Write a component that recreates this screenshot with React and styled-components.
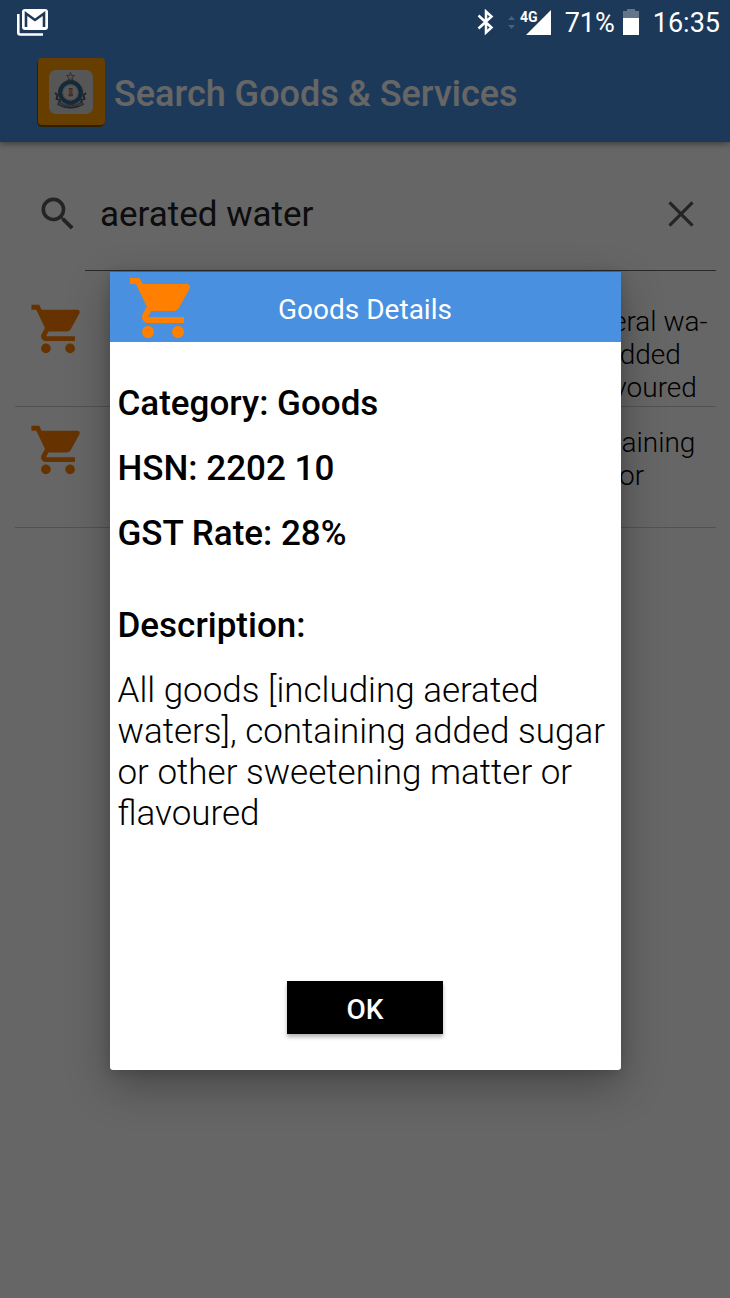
import React, { useState } from "react";
import styled, { createGlobalStyle } from "styled-components";

const GlobalStyle = createGlobalStyle`
  * { box-sizing: border-box; }
  body {
    margin: 0;
    background: #fff;
    color: #000;
    font-family: Roboto, "Noto Sans", sans-serif;
  }
  h1, h2, h3, p, ul { margin: 0; padding: 0; }
`;

const Screen = styled.div`
  position: relative;
  min-height: 100vh;
`;

const StatusBar = styled.div`
  position: absolute;
  inset: 0 0 auto;
  z-index: 3;
  display: flex;
  align-items: center;
  justify-content: space-between;
  height: 44px;
  padding: 0 10px 0 17px;
  color: #fff;
  font-size: 27px;
`;

const StatusGroup = styled.div`
  display: flex;
  align-items: center;
  gap: ${(p) => p.$gap || 0}px;
`;

const StatusText = styled.span`
  padding-top: 2px;
  line-height: 32px;
`;

const AppBar = styled.header`
  display: flex;
  align-items: center;
  gap: 9px;
  height: 142px;
  padding: 44px 16px 0 37px;
  background: #4990e0;
  box-shadow: 0 2px 6px rgba(0, 0, 0, 0.4);
`;

const AppLogo = styled.svg`
  width: 68px;
  height: 70px;
  margin-bottom: 2px;
`;

const AppTitle = styled.h1`
  padding-top: 2px;
  color: #fff;
  font-size: 36px;
  font-weight: 500;
  line-height: 41px;
`;

const SearchRow = styled.label`
  display: flex;
  align-items: center;
  padding: 15px 14px 0 36px;
  color: #5a5a5a;
`;

const SearchField = styled.div`
  display: flex;
  flex: 1;
  align-items: center;
  height: 114px;
  margin-left: 5px;
  padding: 0 13px 0 15px;
  border-bottom: 1px solid #666;
`;

const SearchInput = styled.input`
  flex: 1;
  min-width: 0;
  padding: 2px 0 0;
  border: 0;
  outline: 0;
  background: none;
  color: #212121;
  font: 400 35px/41px Roboto, sans-serif;
`;

const ClearButton = styled.button`
  display: flex;
  padding: 0;
  border: 0;
  background: none;
  color: inherit;
`;

const Results = styled.ul`
  margin: 15px 14px 0 15px;
  list-style: none;
`;

const ResultRow = styled.li`
  display: flex;
  gap: 34px;
  height: 121px;
  padding: 14px 0 0 14px;
  overflow: hidden;
  border-bottom: 1px solid #ccc;
`;

const ResultText = styled.p`
  flex: 1;
  padding-top: 5px;
  font-size: 28px;
  font-weight: 300;
  line-height: 33px;
  white-space: pre;
`;

const Scrim = styled.div`
  position: absolute;
  inset: 0;
  z-index: 2;
  display: flex;
  align-items: center;
  justify-content: center;
  padding-top: 44px;
  background: rgba(0, 0, 0, 0.6);
`;

const Dialog = styled.section`
  width: 70%;
  border-radius: 3px;
  background: #fff;
  box-shadow: 0 16px 44px rgba(0, 0, 0, 0.3), 0 2px 12px rgba(0, 0, 0, 0.15);
`;

const DialogHeader = styled.header`
  display: grid;
  grid-template-columns: 72px 1fr 72px;
  align-items: center;
  height: 70px;
  padding: 0 17px;
  background: #4990e0;
`;

const DialogTitle = styled.h2`
  padding-top: 2px;
  color: #fff;
  font-size: 28px;
  font-weight: 400;
  line-height: 33px;
  text-align: center;
`;

const DialogBody = styled.div`
  display: flex;
  flex-direction: column;
  gap: 24px;
  padding: 41px 8px 0;
  font-size: 35px;
  line-height: 41px;
`;

const Fact = styled.h3`
  font-size: 35px;
  font-weight: 500;
  padding-top: ${(p) => (p.$section ? 27 : 0)}px;
`;

const Description = styled.p`
  font-weight: 300;
`;

const DialogActions = styled.footer`
  display: flex;
  justify-content: center;
  padding: 147px 0 36px;
`;

const OkButton = styled.button`
  width: 156px;
  height: 53px;
  padding: 3px 0 0;
  border: 0;
  background: #000;
  box-shadow: 0 3px 4px rgba(0, 0, 0, 0.3);
  color: #fff;
  font: 500 28px/33px Roboto, sans-serif;
`;

function CartIcon({ size }) {
  return (
    <svg width={size} height={size} viewBox="0 0 24 24" fill="#ff8000" aria-hidden="true">
      <path d="M7 18c-1.1 0-1.99.9-1.99 2S5.9 22 7 22s2-.9 2-2-.9-2-2-2zM1 2v2h2l3.6 7.59-1.35 2.45c-.16.28-.25.61-.25.96 0 1.1.9 2 2 2h12v-2H7.42c-.14 0-.25-.11-.25-.25l.03-.12.9-1.63h7.45c.75 0 1.41-.41 1.75-1.03l3.58-6.49A1.003 1.003 0 0 0 20 4H5.21l-.94-2H1zm16 16c-1.1 0-1.99.9-1.99 2s.89 2 1.99 2 2-.9 2-2-.9-2-2-2z" />
    </svg>
  );
}

function MailIcon() {
  return (
    <svg width="31" height="27" viewBox="0 0 31 27" aria-hidden="true">
      <path d="M1.300 5v18.500a2 2 0 0 0 2 2H26" fill="none" stroke="#fff" strokeWidth="2.600" />
      <path fill="#fff" fillRule="evenodd" d="M8 0h20a3 3 0 0 1 3 3v15a3 3 0 0 1-3 3H8a3 3 0 0 1-3-3V3a3 3 0 0 1 3-3z" />
      <path d="M9 18V4.500l9 6.500 9-6.500V18" fill="none" stroke="#1d3a5a" strokeWidth="2.600" />
    </svg>
  );
}

function BluetoothIcon() {
  return (
    <svg width="17" height="26" viewBox="0 0 17 26" fill="none" stroke="#fff" strokeWidth="2.500" aria-hidden="true">
      <path d="M1.500 6.500 14.500 18.500 9 23.500V2.500l5.500 5L1.500 19.500" />
    </svg>
  );
}

function SignalIcon() {
  return (
    <svg width="43" height="28" viewBox="0 0 43 28" aria-hidden="true">
      <path d="M0 12l3.500-4L7 12zM0 17l3.500 4L7 17z" fill="#4b6078" />
      <path d="M43 2v25H18z" fill="#fff" />
      <text x="12" y="14" fill="#fff" stroke="#1d3a5a" strokeWidth="2" paintOrder="stroke" fontSize="14" fontWeight="700" fontFamily="Roboto">4G</text>
    </svg>
  );
}

function BatteryIcon() {
  return (
    <svg width="16" height="26" viewBox="0 0 16 26" aria-hidden="true">
      <path d="M4 0h8v2h4v7H0V2h4z" fill="#637589" />
      <path d="M0 9h16v17H0z" fill="#fff" />
    </svg>
  );
}

function EmblemLogo() {
  return (
    <AppLogo viewBox="0 0 68 70" aria-hidden="true">
      <rect x="0" y="2" width="68" height="68" rx="5" fill="#7a5200" />
      <rect x="1" y="1" width="67" height="67" rx="4" fill="#ff9f00" />
      <rect x="12" y="13" width="44" height="44" rx="7" fill="#d8d8d8" />
      <path d="M33.500 15.500l1 3h3l-2.400 1.900.9 3-2.500-1.800-2.500 1.800.9-3-2.400-1.900h3z" fill="none" stroke="#666" strokeWidth=".8" />
      <circle cx="33.500" cy="35.500" r="10" fill="#ddd" stroke="#34688f" strokeWidth="3.600" />
      <circle cx="33.500" cy="35.500" r="12.200" fill="none" stroke="#345" strokeWidth=".8" />
      <circle cx="33.500" cy="35.500" r="7.500" fill="none" stroke="#9ab" strokeWidth=".7" />
      <path d="M31.500 31h4.500l-.5 4 .5 4.500h-4.500l.500-4.500z" fill="#c98a68" />
      <path d="M32 31.500h3M31.500 38h4.500" stroke="#766" strokeWidth="1" />
      <path d="M18 36l2.500 2-1 4 3 1 .5 4M49 36l-2.500 2 1 4-3 1-.5 4" fill="none" stroke="#456" strokeWidth="1.800" />
      <path d="M22 44.500q11.500 9 23 0l1.500 3q-13 7.500-26 0z" fill="#8496a8" stroke="#456" strokeWidth=".8" />
      <path d="M25 48.500q8.500 4 17 0" fill="none" stroke="#345" strokeWidth="1" strokeDasharray="1 1" />
    </AppLogo>
  );
}

const results = [
  "Waters, including natural or artificial mineral wa-\nters and aerated waters, not containing added\nsugar or other sweetening matter nor flavoured",
  "All goods [including aerated waters], containing\nadded sugar or other sweetening matter or\nflavoured",
];

const facts = ["Category: Goods", "HSN: 2202 10", "GST Rate: 28%"];

export default function App() {
  const [query, setQuery] = useState("aerated water");
  const [open, setOpen] = useState(true);

  return (
    <Screen>
      <GlobalStyle />
      <StatusBar>
        <MailIcon />
        <StatusGroup $gap={14}>
          <BluetoothIcon />
          <SignalIcon />
          <StatusGroup $gap={8}>
            <StatusText>71%</StatusText>
            <BatteryIcon />
          </StatusGroup>
          <StatusText>16:35</StatusText>
        </StatusGroup>
      </StatusBar>

      <AppBar>
        <EmblemLogo />
        <AppTitle>Search Goods &amp; Services</AppTitle>
      </AppBar>

      <main>
        <SearchRow>
          <svg width="44" height="44" viewBox="0 0 24 24" fill="currentColor" aria-hidden="true">
            <path d="M15.500 14h-.79l-.28-.27A6.471 6.471 0 0 0 16 9.500 6.500 6.500 0 1 0 9.500 16c1.610 0 3.090-.59 4.230-1.570l.27.28v.79l5 4.990L20.490 19l-4.990-5zm-6 0C7.010 14 5 11.990 5 9.500S7.010 5 9.500 5 14 7.010 14 9.500 11.990 14 9.500 14z" />
          </svg>
          <SearchField>
            <SearchInput
              aria-label="Search goods and services"
              value={query}
              onChange={(e) => setQuery(e.target.value)}
            />
            <ClearButton type="button" aria-label="Clear" onClick={() => setQuery("")}>
              <svg width="44" height="44" viewBox="0 0 24 24" fill="none" stroke="currentColor" strokeWidth="1.700" aria-hidden="true">
                <path d="M5.700 5.700l12.600 12.600M18.300 5.700L5.700 18.300" />
              </svg>
            </ClearButton>
          </SearchField>
        </SearchRow>

        <Results>
          {results.map((text) => (
            <ResultRow key={text}>
              <CartIcon size={58} />
              <ResultText>{text}</ResultText>
            </ResultRow>
          ))}
        </Results>
      </main>

      {open && (
        <Scrim>
          <Dialog role="dialog" aria-modal="true" aria-labelledby="details-title">
            <DialogHeader>
              <CartIcon size={72} />
              <DialogTitle id="details-title">Goods Details</DialogTitle>
            </DialogHeader>
            <DialogBody>
              {facts.map((fact) => (
                <Fact key={fact}>{fact}</Fact>
              ))}
              <Fact $section>Description:</Fact>
              <Description>
                All goods [including aerated waters], containing added sugar or
                other sweetening matter or flavoured
              </Description>
            </DialogBody>
            <DialogActions>
              <OkButton type="button" onClick={() => setOpen(false)}>OK</OkButton>
            </DialogActions>
          </Dialog>
        </Scrim>
      )}
    </Screen>
  );
}
